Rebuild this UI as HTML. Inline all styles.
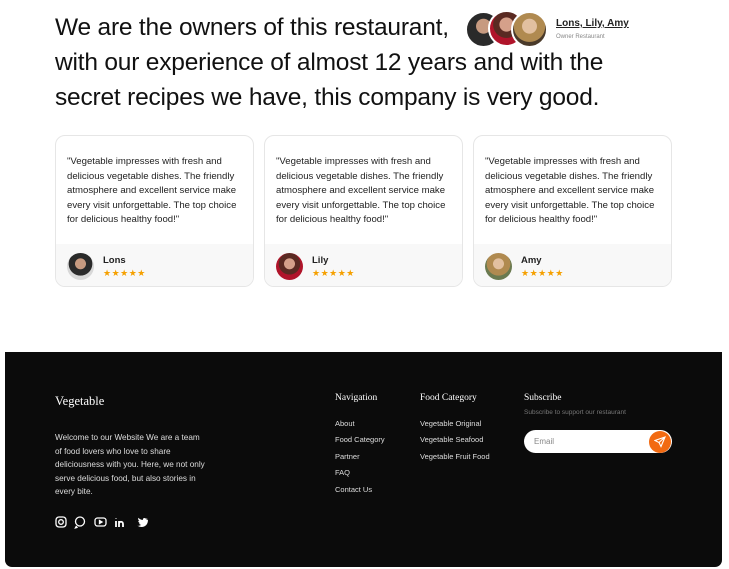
<!DOCTYPE html>
<html><head><meta charset="utf-8"><style>
*{margin:0;padding:0;box-sizing:border-box}
body{width:729px;height:569px;background:#fff;font-family:"Liberation Sans",sans-serif;position:relative;overflow:hidden;color:#111}
.a{position:absolute;white-space:nowrap}
h1{position:absolute;left:55px;top:10px;font-weight:400;font-size:24.5px;line-height:35px;color:#111;letter-spacing:-0.2px}
.av{position:absolute;border-radius:50%;border:2px solid #fff}
.card{position:absolute;top:135px;width:199px;height:152px;border:1px solid #e6e6e6;border-radius:10px;overflow:hidden;background:#fff}
.card p{position:absolute;left:11px;top:19px;font-size:9.6px;line-height:14.5px;color:#222;width:178px;white-space:normal}
.card .bot{position:absolute;left:0;right:0;top:108px;bottom:0;background:#f8f8f8}
.card .ph{position:absolute;left:11px;top:117px;width:27px;height:27px;border-radius:50%}
.card .nm{position:absolute;left:47px;top:119px;font-size:9.5px;font-weight:700;color:#222}
.card .st{position:absolute;left:47px;top:132px;font-size:9px;color:#f5a000;letter-spacing:0.5px}
footer{position:absolute;left:5px;top:352px;width:717px;height:215px;background:#0b0b0b;border-radius:0 0 7px 7px;color:#eee}
footer .a{font-size:7.5px;color:#ddd}
footer .h{font-family:"Liberation Serif",serif;font-size:9.5px;color:#fff}
</style></head><body>
<h1>We are the owners of this restaurant,<br>with our experience of almost 12 years and with the<br>secret recipes we have, this company is very good.</h1>
<div class="av" style="left:465px;top:11px;width:37px;height:37px;background:radial-gradient(circle at 50% 40%,#c79a80 0 28%,#2a2a2a 30% 100%)"></div>
<div class="av" style="left:488px;top:10px;width:37px;height:37px;background:radial-gradient(circle at 50% 38%,#d5a08a 0 26%,#5a2a22 28% 50%,#b0142a 52%)"></div>
<div class="av" style="left:511px;top:11px;width:37px;height:37px;background:radial-gradient(circle at 50% 40%,#e2c0a0 0 28%,#b08a50 30% 60%,#4a3a2a 62%)"></div>
<div class="a" style="left:556px;top:18px;font-size:10px;font-weight:700;text-decoration:underline;color:#222">Lons, Lily, Amy</div>
<div class="a" style="left:556px;top:34px;font-size:6px;color:#888">Owner Restaurant</div>

<div class="card" style="left:55px"><p>"Vegetable impresses with fresh and delicious vegetable dishes. The friendly atmosphere and excellent service make every visit unforgettable. The top choice for delicious healthy food!"</p><div class="bot"></div><div class="ph" style="background:radial-gradient(circle at 50% 40%,#c79a80 0 25%,#2a2a2a 27% 55%,#d8d8d8 57%)"></div><div class="nm">Lons</div><div class="st">★★★★★</div></div>
<div class="card" style="left:264px"><p>"Vegetable impresses with fresh and delicious vegetable dishes. The friendly atmosphere and excellent service make every visit unforgettable. The top choice for delicious healthy food!"</p><div class="bot"></div><div class="ph" style="background:radial-gradient(circle at 50% 40%,#d5a08a 0 25%,#5a2a22 27% 50%,#b0142a 52%)"></div><div class="nm">Lily</div><div class="st">★★★★★</div></div>
<div class="card" style="left:473px"><p>"Vegetable impresses with fresh and delicious vegetable dishes. The friendly atmosphere and excellent service make every visit unforgettable. The top choice for delicious healthy food!"</p><div class="bot"></div><div class="ph" style="background:radial-gradient(circle at 50% 40%,#e2c0a0 0 25%,#b08a50 27% 55%,#6a7a50 57%)"></div><div class="nm">Amy</div><div class="st">★★★★★</div></div>

<footer>
<div class="a h" style="left:50px;top:42px;font-size:12.5px">Vegetable</div>
<div class="a" style="left:50px;top:79px;line-height:13.5px;white-space:normal;width:152px;font-size:8.2px">Welcome to our Website We are a team of food lovers who love to share deliciousness with you. Here, we not only serve delicious food, but also stories in every bite.</div>
<svg class="a" style="left:50px;top:163px" width="100" height="14" viewBox="0 0 100 14" fill="none" stroke="#fff" stroke-width="1.3">
<rect x="1" y="2" width="10" height="10" rx="3"/><circle cx="6" cy="7" r="2.3"/>
<circle cx="25" cy="6.5" r="4.5"/><path d="M21.5 11l-1 1.8 2.2-.6"/>
<rect x="40" y="3" width="11" height="8" rx="2.5"/><path d="M44.5 5.5v3l2.5-1.5z" fill="#fff"/>
<path d="M61 6v6M61 3.5v.5M64 12V6M64 9c0-3 4-3 4 0v3" stroke-width="1.8"/>
<path d="M90 4.5c1 .3 2-.4 2.5-1-1 .3-1.6.2-2-.1-1-1-3-.3-2.6 1.6-2-.1-3.5-1-4.5-2.2-.6 1.2 0 2.5 1 3.2-.5 0-1-.2-1.2-.3 0 1.2 1 2.2 2 2.4-.5.2-1 .2-1.3.1.4 1 1.3 1.6 2.3 1.6-1 .8-2.4 1.2-3.8 1 6 3.5 11-1 10.5-6z" fill="#fff" stroke="none"/>
</svg>
<div class="a h" style="left:330px;top:41px">Navigation</div>
<div class="a" style="left:330px;top:67px">About</div>
<div class="a" style="left:330px;top:83px">Food Category</div>
<div class="a" style="left:330px;top:100px">Partner</div>
<div class="a" style="left:330px;top:116px">FAQ</div>
<div class="a" style="left:330px;top:133px">Contact Us</div>
<div class="a h" style="left:415px;top:41px">Food Category</div>
<div class="a" style="left:415px;top:67px">Vegetable Original</div>
<div class="a" style="left:415px;top:83px">Vegetable Seafood</div>
<div class="a" style="left:415px;top:100px">Vegetable Fruit Food</div>
<div class="a h" style="left:519px;top:41px">Subscribe</div>
<div class="a" style="left:519px;top:57px;font-size:6.5px;color:#777">Subscribe to support our restaurant</div>
<div class="a" style="left:519px;top:78px;width:148px;height:23px;background:#fff;border-radius:12px"></div>
<div class="a" style="left:529px;top:85px;color:#888;font-size:8px">Email</div>
<div class="a" style="left:644px;top:79px;width:22px;height:22px;border-radius:50%;background:#f26a12"></div>
<svg class="a" style="left:649px;top:84px" width="12" height="12" viewBox="0 0 12 12" fill="none" stroke="#fff" stroke-width="1.1"><path d="M11 1L1 4.5l4 2 2 4z M11 1L5 6.5"/></svg>
</footer>
</body></html>
